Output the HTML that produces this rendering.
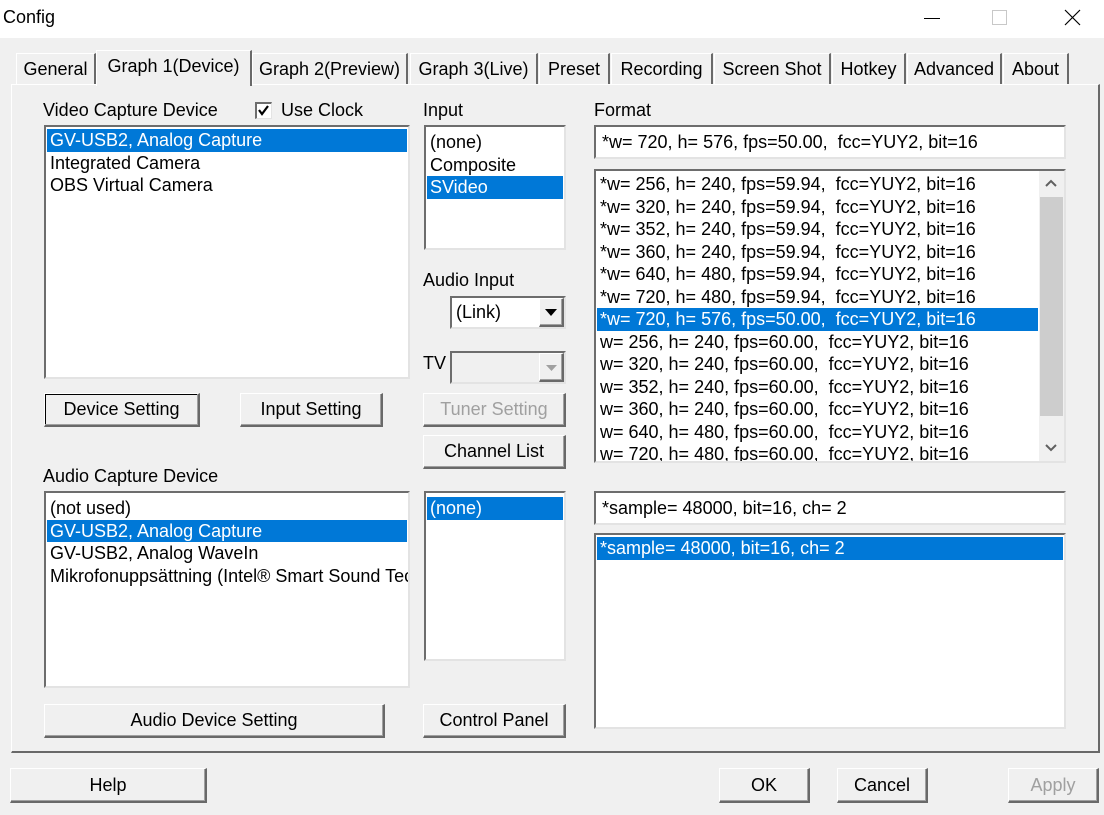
<!DOCTYPE html><html><head><meta charset="utf-8"><style>
*{box-sizing:border-box;margin:0;padding:0}
body{width:1104px;height:815px;background:#f0f0f0;font-family:"Liberation Sans",sans-serif;font-size:18px;color:#000;position:relative;overflow:hidden}
.a{position:absolute;white-space:nowrap}
.title{left:0;top:0;width:1104px;height:38px;background:#fff}
.sunk{position:absolute;background:#fff;border-top:2px solid #6d6d6d;border-left:2px solid #6d6d6d;border-right:2px solid #e3e3e3;border-bottom:2px solid #e3e3e3;overflow:hidden}
.btn{position:absolute;background:#f0f0f0;border-top:1px solid #fff;border-left:1px solid #fff;border-right:2px solid #696969;border-bottom:2px solid #696969;text-align:center;box-shadow:inset -1px -1px 0 #a0a0a0}
.row{height:22.5px;line-height:22px;padding-left:3px;white-space:nowrap}
.sel{background:#0078d7;color:#fff}
.tab{position:absolute;top:53px;height:31px;line-height:30px;text-align:center;border-top:1px solid #fff;border-left:1px solid #fff;border-right:2px solid #696969;background:#f0f0f0}
.dis{color:#a0a0a0}
</style></head><body>
<div class="a title"></div>
<div class="a" style="left:3px;top:7px;font-size:18px">Config</div>
<div class="a" style="left:924px;top:18px;width:16px;height:1px;background:#000"></div>
<div class="a" style="left:992px;top:10px;width:15px;height:15px;border:1px solid #c8c8c8"></div>
<svg class="a" style="left:1064px;top:9px" width="17" height="17"><path d="M1 1L16 16M16 1L1 16" stroke="#000" stroke-width="1.2"/></svg>

<div class="a" style="left:11px;top:84px;width:1089px;height:669px;border-top:1px solid #fff;border-left:1px solid #fff;border-right:2px solid #696969;border-bottom:2px solid #696969"></div>
<div class="tab" style="left:16px;width:80px">General</div>
<div class="tab" style="left:252px;width:156px">Graph 2(Preview)</div>
<div class="tab" style="left:410px;width:128px">Graph 3(Live)</div>
<div class="tab" style="left:539px;width:71px">Preset</div>
<div class="tab" style="left:611px;width:102px">Recording</div>
<div class="tab" style="left:714px;width:117px">Screen Shot</div>
<div class="tab" style="left:832px;width:74px">Hotkey</div>
<div class="tab" style="left:907px;width:95px">Advanced</div>
<div class="tab" style="left:1003px;width:66px">About</div>
<div class="tab" style="left:96px;top:50px;width:156px;height:36px;line-height:30px;border-bottom:none">Graph 1(Device)</div>

<div class="a" style="left:43px;top:100px">Video Capture Device</div>
<div class="a" style="left:255px;top:102px;width:17px;height:17px;background:#fff;border-top:2px solid #6d6d6d;border-left:2px solid #6d6d6d;border-right:1px solid #e3e3e3;border-bottom:1px solid #e3e3e3"></div>
<svg class="a" style="left:257px;top:104px" width="13" height="13"><path d="M2 6L5 10L11 2" stroke="#000" stroke-width="2.2" fill="none"/></svg>
<div class="a" style="left:281px;top:100px">Use Clock</div>
<div class="sunk" style="left:44px;top:125px;width:366px;height:254px;padding:2px 1px"><div class="row sel">GV-USB2, Analog Capture</div><div class="row">Integrated Camera</div><div class="row">OBS Virtual Camera</div></div>
<div class="btn" style="left:44px;top:393px;width:156px;height:34px;line-height:31px;box-shadow:inset -1px -1px 0 #a0a0a0,inset 1px 1px 0 #000">Device Setting</div>
<div class="btn" style="left:240px;top:393px;width:143px;height:34px;line-height:31px">Input Setting</div>
<div class="a" style="left:43px;top:466px">Audio Capture Device</div>
<div class="sunk" style="left:44px;top:491px;width:366px;height:197px;padding:4px 1px"><div class="row">(not used)</div><div class="row sel">GV-USB2, Analog Capture</div><div class="row">GV-USB2, Analog WaveIn</div><div class="row">Mikrofonuppsättning (Intel® Smart Sound Technology)</div></div>
<div class="btn" style="left:44px;top:704px;width:341px;height:34px;line-height:31px">Audio Device Setting</div>

<div class="a" style="left:423px;top:100px">Input</div>
<div class="sunk" style="left:424px;top:125px;width:142px;height:125px;padding:4px 1px"><div class="row">(none)</div><div class="row">Composite</div><div class="row sel">SVideo</div></div>
<div class="a" style="left:423px;top:270px">Audio Input</div>
<div class="sunk" style="left:450px;top:296px;width:116px;height:33px;line-height:29px;padding-left:4px">(Link)</div>
<div class="btn" style="left:539px;top:298px;width:25px;height:29px"></div>
<svg class="a" style="left:545px;top:309px" width="12" height="7"><path d="M0 0H12L6 7Z" fill="#000"/></svg>
<div class="a" style="left:423px;top:353px">TV</div>
<div class="sunk" style="left:450px;top:351px;width:116px;height:33px;background:#f0f0f0"></div>
<div class="btn" style="left:539px;top:353px;width:25px;height:29px"></div>
<svg class="a" style="left:546px;top:365px" width="11" height="6"><path d="M0 0H11L5.5 6Z" fill="#a0a0a0"/></svg>
<div class="btn dis" style="left:423px;top:393px;width:143px;height:34px;line-height:31px">Tuner Setting</div>
<div class="btn" style="left:423px;top:435px;width:143px;height:34px;line-height:31px">Channel List</div>
<div class="sunk" style="left:424px;top:491px;width:142px;height:170px;padding:4px 1px"><div class="row sel">(none)</div></div>
<div class="btn" style="left:423px;top:704px;width:143px;height:34px;line-height:31px">Control Panel</div>

<div class="a" style="left:594px;top:100px">Format</div>
<div class="sunk" style="left:594px;top:125px;width:472px;height:34px;line-height:30px;padding-left:6px">*w= 720, h= 576, fps=50.00,&nbsp; fcc=YUY2, bit=16</div>
<div class="sunk" style="left:594px;top:169px;width:472px;height:294px;padding:2px 1px">
<div style="width:441px">
<div class="row">*w= 256, h= 240, fps=59.94,&nbsp; fcc=YUY2, bit=16</div>
<div class="row">*w= 320, h= 240, fps=59.94,&nbsp; fcc=YUY2, bit=16</div>
<div class="row">*w= 352, h= 240, fps=59.94,&nbsp; fcc=YUY2, bit=16</div>
<div class="row">*w= 360, h= 240, fps=59.94,&nbsp; fcc=YUY2, bit=16</div>
<div class="row">*w= 640, h= 480, fps=59.94,&nbsp; fcc=YUY2, bit=16</div>
<div class="row">*w= 720, h= 480, fps=59.94,&nbsp; fcc=YUY2, bit=16</div>
<div class="row sel">*w= 720, h= 576, fps=50.00,&nbsp; fcc=YUY2, bit=16</div>
<div class="row">w= 256, h= 240, fps=60.00,&nbsp; fcc=YUY2, bit=16</div>
<div class="row">w= 320, h= 240, fps=60.00,&nbsp; fcc=YUY2, bit=16</div>
<div class="row">w= 352, h= 240, fps=60.00,&nbsp; fcc=YUY2, bit=16</div>
<div class="row">w= 360, h= 240, fps=60.00,&nbsp; fcc=YUY2, bit=16</div>
<div class="row">w= 640, h= 480, fps=60.00,&nbsp; fcc=YUY2, bit=16</div>
<div class="row">w= 720, h= 480, fps=60.00,&nbsp; fcc=YUY2, bit=16</div>
</div></div>
<div class="a" style="left:1039px;top:171px;width:25px;height:290px;background:#f0f0f0"></div>
<div class="a" style="left:1040px;top:197px;width:23px;height:219px;background:#cdcdcd"></div>
<svg class="a" style="left:1045px;top:179px" width="12" height="8"><path d="M1 7L6 2L11 7" stroke="#606060" stroke-width="2" fill="none"/></svg>
<svg class="a" style="left:1045px;top:444px" width="12" height="8"><path d="M1 1L6 6L11 1" stroke="#606060" stroke-width="2" fill="none"/></svg>
<div class="sunk" style="left:594px;top:491px;width:472px;height:34px;line-height:30px;padding-left:6px">*sample= 48000, bit=16, ch= 2</div>
<div class="sunk" style="left:594px;top:533px;width:472px;height:196px;padding:2px 1px"><div class="row sel">*sample= 48000, bit=16, ch= 2</div></div>

<div class="btn" style="left:10px;top:768px;width:197px;height:35px;line-height:32px">Help</div>
<div class="btn" style="left:719px;top:768px;width:91px;height:35px;line-height:32px">OK</div>
<div class="btn" style="left:837px;top:768px;width:91px;height:35px;line-height:32px">Cancel</div>
<div class="btn dis" style="left:1008px;top:768px;width:91px;height:35px;line-height:32px">Apply</div>
</body></html>
